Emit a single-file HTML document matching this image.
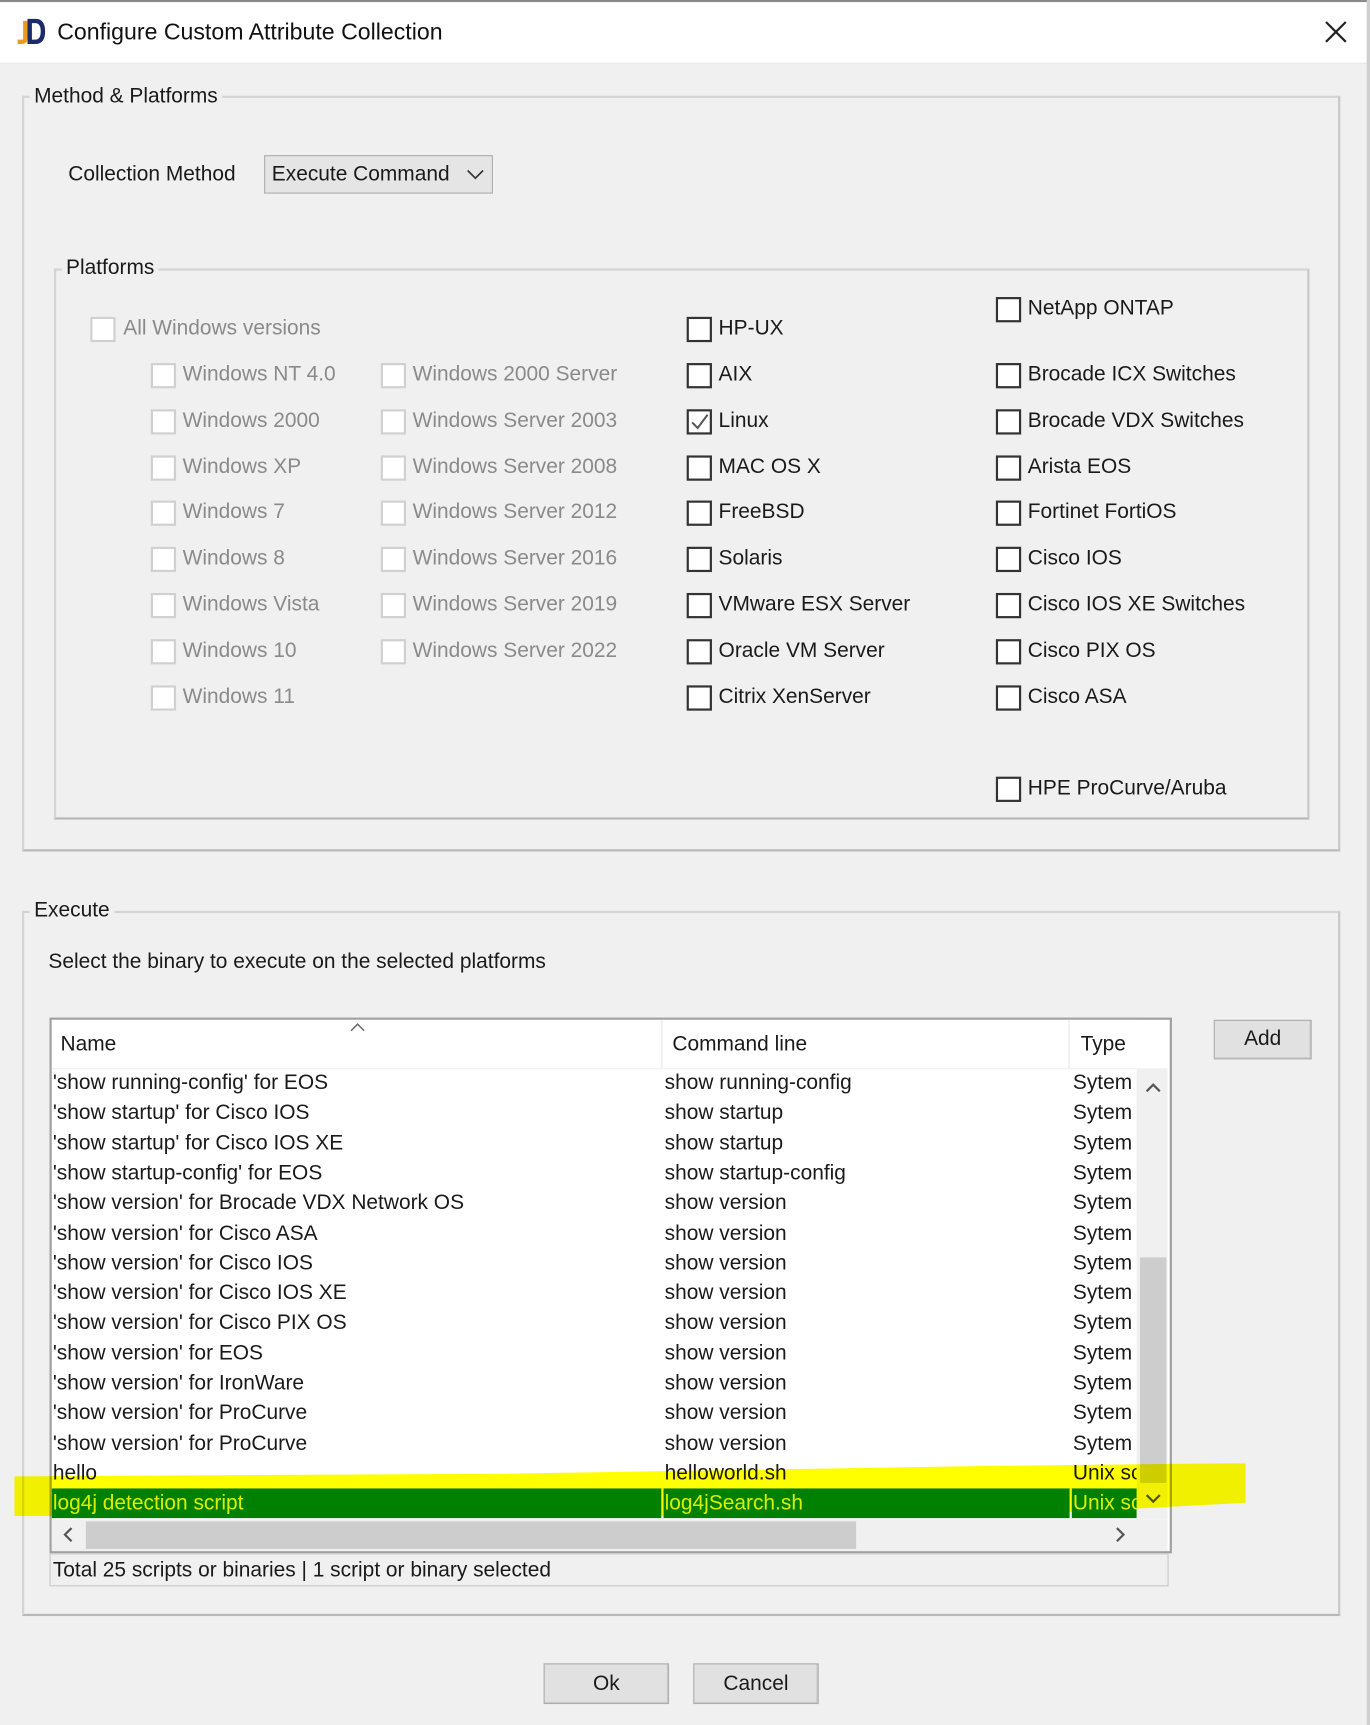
<!DOCTYPE html>
<html><head><meta charset="utf-8">
<style>
html,body{margin:0;padding:0;width:1370px;height:1725px;overflow:hidden;background:#f0f0f0}
#w{position:absolute;left:0;top:0;width:1245px;height:1568px;transform:scale(1.1004,1.1001);transform-origin:0 0;background:#f0f0f0;font-family:"Liberation Sans",sans-serif;font-size:19px;color:#1a1a1a}
.a{position:absolute;white-space:nowrap}
.t{position:absolute;white-space:nowrap;line-height:24px;height:24px}
.cb{position:absolute;width:19px;height:19px;border:2px solid #333;background:#fff}
.cd{position:absolute;width:19px;height:19px;border:2px solid #d0d0d0;background:#fff}
.dis{color:#8a8a8a}
.grp{position:absolute;border:2px solid #d4d4d4;border-right-color:#c8c8c8;border-bottom-color:#b8b8b8}
.lg{position:absolute;background:#f0f0f0;padding:0 4px;line-height:24px}
.btn{position:absolute;background:#e1e1e1;border:1px solid #adadad;box-shadow:inset -1px -1px 0 #c8c8c8;text-align:center}
.row{position:absolute;left:0;height:27px;line-height:27px;width:1000px}
.row span{position:absolute;white-space:nowrap}
</style></head><body><div id="w">
<div class="a" style="left:0;top:0;width:1245px;height:2px;background:#8a8a8a"></div>
<div class="a" style="left:0;top:2px;width:1243px;height:55px;background:#fff;border-bottom:1px solid #e6e6e6"></div>
<div class="a" style="left:1242px;top:0;width:3px;height:1568px;background:#cfcfcf"></div>
<svg class="a" style="left:14px;top:17px" width="28" height="24" viewBox="0 0 28 24"><path d="M9 2V18Q9 21 6 21H2" stroke="#e89b1c" stroke-width="4" fill="none"/><path d="M13 2H18Q25 2 25 11.5Q25 21 18 21H13Z" stroke="#1f2a6b" stroke-width="4" fill="none"/></svg>
<div class="a" style="left:52px;top:17px;font-size:21px;line-height:26px;color:#111">Configure Custom Attribute Collection</div>
<svg class="a" style="left:1203px;top:18px" width="22" height="22" viewBox="0 0 22 22"><path d="M2 2L20 20M20 2L2 20" stroke="#222" stroke-width="2"/></svg>

<div class="grp" style="left:20px;top:87px;width:1194px;height:683px"></div>
<div class="lg" style="left:27px;top:76px">Method &amp; Platforms</div>
<div class="t" style="left:62px;top:147px">Collection Method</div>
<div class="a" style="left:240px;top:141px;width:206px;height:33px;background:#e5e5e5;border:1px solid #adadad"></div>
<div class="t" style="left:247px;top:147px">Execute Command</div>
<svg class="a" style="left:424px;top:154px" width="16" height="10"><path d="M1 1L8 8L15 1" stroke="#333" stroke-width="1.5" fill="none"/></svg>

<div class="grp" style="left:49px;top:244px;width:1137px;height:497px"></div>
<div class="lg" style="left:56px;top:232px">Platforms</div>

<div class="cd" style="left:82px;top:288px"></div><div class="t dis" style="left:112px;top:287px">All Windows versions</div>

<div class="cd" style="left:137px;top:330px"></div><div class="t dis" style="left:166px;top:329px">Windows NT 4.0</div>
<div class="cd" style="left:137px;top:372px"></div><div class="t dis" style="left:166px;top:371px">Windows 2000</div>
<div class="cd" style="left:137px;top:414px"></div><div class="t dis" style="left:166px;top:413px">Windows XP</div>
<div class="cd" style="left:137px;top:455px"></div><div class="t dis" style="left:166px;top:454px">Windows 7</div>
<div class="cd" style="left:137px;top:497px"></div><div class="t dis" style="left:166px;top:496px">Windows 8</div>
<div class="cd" style="left:137px;top:539px"></div><div class="t dis" style="left:166px;top:538px">Windows Vista</div>
<div class="cd" style="left:137px;top:581px"></div><div class="t dis" style="left:166px;top:580px">Windows 10</div>
<div class="cd" style="left:137px;top:623px"></div><div class="t dis" style="left:166px;top:622px">Windows 11</div>

<div class="cd" style="left:346px;top:330px"></div><div class="t dis" style="left:375px;top:329px">Windows 2000 Server</div>
<div class="cd" style="left:346px;top:372px"></div><div class="t dis" style="left:375px;top:371px">Windows Server 2003</div>
<div class="cd" style="left:346px;top:414px"></div><div class="t dis" style="left:375px;top:413px">Windows Server 2008</div>
<div class="cd" style="left:346px;top:455px"></div><div class="t dis" style="left:375px;top:454px">Windows Server 2012</div>
<div class="cd" style="left:346px;top:497px"></div><div class="t dis" style="left:375px;top:496px">Windows Server 2016</div>
<div class="cd" style="left:346px;top:539px"></div><div class="t dis" style="left:375px;top:538px">Windows Server 2019</div>
<div class="cd" style="left:346px;top:581px"></div><div class="t dis" style="left:375px;top:580px">Windows Server 2022</div>

<div class="cb" style="left:624px;top:288px"></div><div class="t" style="left:653px;top:287px">HP-UX</div>
<div class="cb" style="left:624px;top:330px"></div><div class="t" style="left:653px;top:329px">AIX</div>
<div class="cb" style="left:624px;top:372px"><svg width="19" height="19"><path d="M3 10L8 15L17 3" stroke="#555" stroke-width="1.8" fill="none"/></svg></div><div class="t" style="left:653px;top:371px">Linux</div>
<div class="cb" style="left:624px;top:414px"></div><div class="t" style="left:653px;top:413px">MAC OS X</div>
<div class="cb" style="left:624px;top:455px"></div><div class="t" style="left:653px;top:454px">FreeBSD</div>
<div class="cb" style="left:624px;top:497px"></div><div class="t" style="left:653px;top:496px">Solaris</div>
<div class="cb" style="left:624px;top:539px"></div><div class="t" style="left:653px;top:538px">VMware ESX Server</div>
<div class="cb" style="left:624px;top:581px"></div><div class="t" style="left:653px;top:580px">Oracle VM Server</div>
<div class="cb" style="left:624px;top:623px"></div><div class="t" style="left:653px;top:622px">Citrix XenServer</div>

<div class="cb" style="left:905px;top:270px"></div><div class="t" style="left:934px;top:269px">NetApp ONTAP</div>
<div class="cb" style="left:905px;top:330px"></div><div class="t" style="left:934px;top:329px">Brocade ICX Switches</div>
<div class="cb" style="left:905px;top:372px"></div><div class="t" style="left:934px;top:371px">Brocade VDX Switches</div>
<div class="cb" style="left:905px;top:414px"></div><div class="t" style="left:934px;top:413px">Arista EOS</div>
<div class="cb" style="left:905px;top:455px"></div><div class="t" style="left:934px;top:454px">Fortinet FortiOS</div>
<div class="cb" style="left:905px;top:497px"></div><div class="t" style="left:934px;top:496px">Cisco IOS</div>
<div class="cb" style="left:905px;top:539px"></div><div class="t" style="left:934px;top:538px">Cisco IOS XE Switches</div>
<div class="cb" style="left:905px;top:581px"></div><div class="t" style="left:934px;top:580px">Cisco PIX OS</div>
<div class="cb" style="left:905px;top:623px"></div><div class="t" style="left:934px;top:622px">Cisco ASA</div>
<div class="cb" style="left:905px;top:706px"></div><div class="t" style="left:934px;top:705px">HPE ProCurve/Aruba</div>

<div class="grp" style="left:20px;top:828px;width:1194px;height:637px"></div>
<div class="lg" style="left:27px;top:816px">Execute</div>
<div class="t" style="left:44px;top:863px">Select the binary to execute on the selected platforms</div>

<div class="a" style="left:45px;top:925px;width:1016px;height:483px;background:#fff;border:2px solid #a0a0a0;overflow:hidden">
  <div class="a" style="left:0;top:0;width:986px;height:44px;background:#fff;border-bottom:1px solid #eee"></div>
  <div class="a" style="left:554px;top:0;width:1px;height:44px;background:#e5e5e5"></div>
  <div class="a" style="left:924px;top:0;width:1px;height:44px;background:#e5e5e5"></div>
  <svg class="a" style="left:271px;top:2px" width="14" height="9"><path d="M1 8L7 2L13 8" stroke="#666" stroke-width="1.3" fill="none"/></svg>
  <div class="t" style="left:8px;top:11px">Name</div>
  <div class="t" style="left:564px;top:11px">Command line</div>
  <div class="t" style="left:935px;top:11px">Type</div>
  <div class="a" style="left:0;top:44px;width:986px;height:410px">
    <div class="row" style="top:0"><span style="left:1px">'show running-config' for EOS</span><span style="left:557px">show running-config</span><span style="left:928px">Sytem</span></div>
    <div class="row" style="top:27.3px"><span style="left:1px">'show startup' for Cisco IOS</span><span style="left:557px">show startup</span><span style="left:928px">Sytem</span></div>
    <div class="row" style="top:54.6px"><span style="left:1px">'show startup' for Cisco IOS XE</span><span style="left:557px">show startup</span><span style="left:928px">Sytem</span></div>
    <div class="row" style="top:81.9px"><span style="left:1px">'show startup-config' for EOS</span><span style="left:557px">show startup-config</span><span style="left:928px">Sytem</span></div>
    <div class="row" style="top:109.2px"><span style="left:1px">'show version' for Brocade VDX Network OS</span><span style="left:557px">show version</span><span style="left:928px">Sytem</span></div>
    <div class="row" style="top:136.5px"><span style="left:1px">'show version' for Cisco ASA</span><span style="left:557px">show version</span><span style="left:928px">Sytem</span></div>
    <div class="row" style="top:163.8px"><span style="left:1px">'show version' for Cisco IOS</span><span style="left:557px">show version</span><span style="left:928px">Sytem</span></div>
    <div class="row" style="top:191.1px"><span style="left:1px">'show version' for Cisco IOS XE</span><span style="left:557px">show version</span><span style="left:928px">Sytem</span></div>
    <div class="row" style="top:218.4px"><span style="left:1px">'show version' for Cisco PIX OS</span><span style="left:557px">show version</span><span style="left:928px">Sytem</span></div>
    <div class="row" style="top:245.7px"><span style="left:1px">'show version' for EOS</span><span style="left:557px">show version</span><span style="left:928px">Sytem</span></div>
    <div class="row" style="top:273px"><span style="left:1px">'show version' for IronWare</span><span style="left:557px">show version</span><span style="left:928px">Sytem</span></div>
    <div class="row" style="top:300.3px"><span style="left:1px">'show version' for ProCurve</span><span style="left:557px">show version</span><span style="left:928px">Sytem</span></div>
    <div class="row" style="top:327.6px"><span style="left:1px">'show version' for ProCurve</span><span style="left:557px">show version</span><span style="left:928px">Sytem</span></div>
    <div class="row" style="top:354.9px;width:986px;overflow:hidden"><span style="left:1px">hello</span><span style="left:557px">helloworld.sh</span><span style="left:928px">Unix script</span></div>
    <div class="row" style="top:382.2px;width:986px;overflow:hidden;background:#008000;color:#d8f000"><span style="left:1px">log4j detection script</span><span style="left:557px">log4jSearch.sh</span><span style="left:928px">Unix script</span>
      <div class="a" style="left:554px;top:0;width:2px;height:27px;background:#fff"></div><div class="a" style="left:925px;top:0;width:2px;height:27px;background:#fff"></div></div>
  </div>
  <div class="a" style="left:986px;top:44px;width:28px;height:410px;background:#f0f0f0"></div>
  <svg class="a" style="left:994px;top:57px" width="14" height="9"><path d="M1 8L7 2L13 8" stroke="#555" stroke-width="2" fill="none"/></svg>
  <div class="a" style="left:989px;top:216px;width:24px;height:205px;background:#cdcdcd"></div>
  <svg class="a" style="left:994px;top:431px" width="14" height="9"><path d="M1 1L7 7L13 1" stroke="#555" stroke-width="2" fill="none"/></svg>
  <div class="a" style="left:0;top:454px;width:1014px;height:29px;background:#f0f0f0"></div>
  <div class="a" style="left:31px;top:456px;width:700px;height:25px;background:#cdcdcd"></div>
  <svg class="a" style="left:10px;top:461px" width="9" height="14"><path d="M8 1L2 7L8 13" stroke="#555" stroke-width="2" fill="none"/></svg>
  <svg class="a" style="left:967px;top:461px" width="9" height="14"><path d="M1 1L7 7L1 13" stroke="#555" stroke-width="2" fill="none"/></svg>
</div>
<div class="a" style="left:45px;top:1412px;width:1015px;height:28px;background:#f0f0f0;border:1px solid #c8c8c8"></div>
<div class="t" style="left:48px;top:1416px">Total 25 scripts or binaries | 1 script or binary selected</div>

<div class="a" style="left:13px;top:1330px;width:1119px;height:48px;background:#ffff00;mix-blend-mode:multiply;clip-path:polygon(0 25%,40% 20%,80% 5%,100% 0,100% 75%,80% 100%,0 100%)"></div>

<div class="btn" style="left:1103px;top:927px;width:87px;height:34px;line-height:34px">Add</div>
<div class="btn" style="left:494px;top:1512px;width:112px;height:35px;line-height:35px">Ok</div>
<div class="btn" style="left:630px;top:1512px;width:112px;height:35px;line-height:35px">Cancel</div>
</div></body></html>
